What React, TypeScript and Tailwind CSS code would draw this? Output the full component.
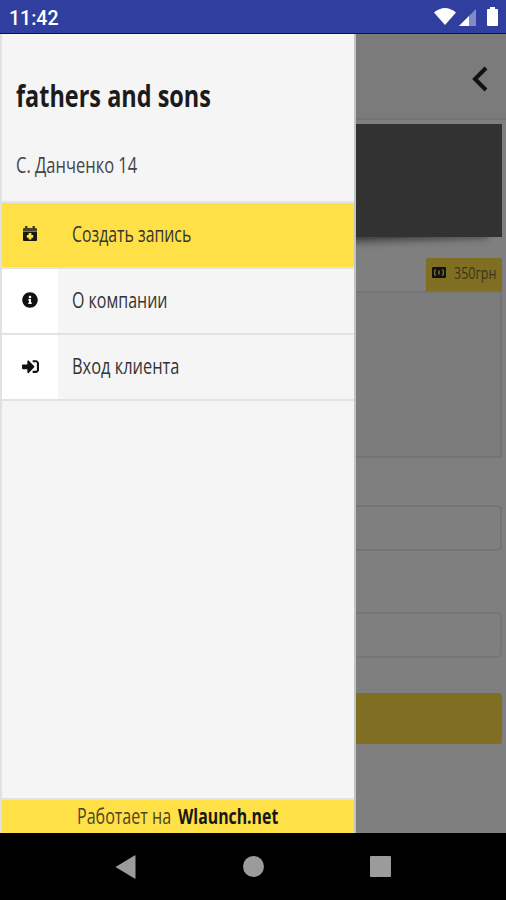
import type { ReactNode } from 'react';
import { FaInfoCircle, FaSignInAlt } from 'react-icons/fa';

function Narrow({ className, children }: { className: string; children: ReactNode }) {
  return (
    <span className={`block w-max origin-left whitespace-nowrap ${className}`}>{children}</span>
  );
}

function StatusBar() {
  return (
    <header className="flex h-[34px] shrink-0 items-center justify-between border-b border-[#08088a] bg-[#303f9f] pt-px pr-[7px] pl-[9px] text-white">
      <span className="pt-[3px] font-[Roboto,sans-serif] text-[19.5px] leading-none font-medium">11:42</span>
      <svg width="66" height="22" viewBox="0 0 66 22" fill="currentColor">
        <path d="M1 6.5Q12 -2.5 23 6.5L12 19Z" />
        <path d="M43 3V20H26Z" opacity=".4" />
        <path d="M36 10V20H26Z" />
        <path d="M55 3h2V1h5v2h2q1 0 1 1v15q0 1-1 1h-9q-1 0-1-1V4q0-1 1-1Z" />
      </svg>
    </header>
  );
}

function CalendarPlus() {
  return (
    <svg width="16" height="18" viewBox="0 0 16 18">
      <path d="M1 4q0-1 1-1h1V1h2.5v2h5V1H13v2h1q1 0 1 1v2H1Z" fill="#4a4220" />
      <path d="M1 6.500h14v8.500q0 1-1 1H2q-1 0-1-1Z" fill="#171714" />
      <path d="M8 8v6.500M4.800 11.300h6.400" stroke="#ffe047" strokeWidth="2.8" />
    </svg>
  );
}

function MenuRow({ icon, active, children }: { icon: ReactNode; active?: boolean; children: ReactNode }) {
  return (
    <li className={`flex h-[66px] border-b-2 border-[#dfe3e5] ${active ? 'bg-[#ffe047]' : 'bg-[#f5f5f5]'}`}>
      <span className={`flex w-14 items-center justify-center pb-0.5 text-[#111] ${active ? '' : 'bg-white'}`}>{icon}</span>
      <span className="flex items-center pb-[4px] pl-3.5 text-[22px] text-[#333]">{children}</span>
    </li>
  );
}

function Drawer() {
  return (
    <aside className="absolute inset-y-0 left-0 flex w-[356px] flex-col border-r-2 border-l-2 border-r-[#bfc5c6] border-l-[#dfe2e4] bg-[#f5f5f5]">
      <div className="flex h-[169px] flex-col border-b-2 border-[#e1e4e8] pl-3.5">
        <h1 className="mt-[41px] text-[30px] leading-[42px] font-bold text-[#1b1b1b]">
          <Narrow className="scale-x-[0.782]">fathers and sons</Narrow>
        </h1>
        <p className="mt-[32px] text-[22px] leading-[30px] text-[#444]">
          <Narrow className="scale-x-[0.75]">С. Данченко 14</Narrow>
        </p>
      </div>
      <ul>
        <MenuRow active icon={<CalendarPlus />}>
          <Narrow className="scale-x-[0.72]">Создать запись</Narrow>
        </MenuRow>
        <MenuRow icon={<FaInfoCircle size={16} />}>
          <Narrow className="scale-x-[0.727]">О компании</Narrow>
        </MenuRow>
        <MenuRow icon={<FaSignInAlt size={17} />}>
          <Narrow className="scale-x-[0.745]">Вход клиента</Narrow>
        </MenuRow>
      </ul>
      <footer className="mt-auto flex h-[35px] items-center border-t-2 border-[#dfe3e5] bg-[#ffe047] pb-1 pl-[75px] text-[22px] leading-none">
        <div className="w-[101px] text-[#4c4522]">
          <Narrow className="scale-x-[0.73]">Работает на</Narrow>
        </div>
        <div className="font-bold text-[#171714]">
          <Narrow className="scale-x-[0.72]">Wlaunch.net</Narrow>
        </div>
      </footer>
    </aside>
  );
}

function BookingPage() {
  return (
    <div className="flex h-full flex-col bg-[#7f7f7f] pr-[4px]">
      <div className="-mr-[4px] flex h-[86px] shrink-0 items-center justify-end border-b-2 border-[#717474] bg-[#7b7b7b] pt-[5px] pr-[18px]">
        <svg width="17" height="26" viewBox="0 0 17 26" fill="none" stroke="#111" strokeWidth="4">
          <path d="M15 2 4 13 15 24" />
        </svg>
      </div>
      <div className="relative mt-1 h-[113px] shrink-0">
        <div className="absolute right-4 bottom-0.5 h-5 w-[200px] origin-right -rotate-2 bg-[#484848] shadow-[0_1px_7px_2px_#484848]" />
        <div className="relative h-full bg-[#323232]" />
      </div>
      <div className="mt-[21px] flex h-[33px] w-[76px] shrink-0 items-center self-end rounded-t-xs bg-[#806f23] pb-1 pl-1.5">
        <svg className="shrink-0" width="14" height="11" viewBox="0 0 14 11">
          <rect width="14" height="11" rx="1" fill="#111" />
          <path d="M4 2h6q2 0 2 2v3q0 2-2 2H4Q2 9 2 7V4Q2 2 4 2" fill="#806f23" />
          <ellipse cx="7" cy="5.500" rx="3.800" ry="4.500" fill="#111" />
          <path d="M7 3.500v4" stroke="#806f23" strokeWidth="1.500" />
        </svg>
        <div className="w-[42px] pl-2 text-[17px] leading-none text-[#393319]">
          <Narrow className="scale-x-[0.735]">350грн</Narrow>
        </div>
      </div>
      <div className="h-[167px] shrink-0 border-t-2 border-r-2 border-b-2 border-[#727575] bg-[#7c7c7c]" />
      <div className="mt-[47px] h-[46px] shrink-0 rounded-[5px] border-2 border-[#737676]" />
      <div className="mt-[61px] h-[46px] shrink-0 rounded-[5px] border-2 border-[#757777]" />
      <div className="mt-[35px] h-[51px] shrink-0 rounded-[3px] bg-[#806f23]" />
    </div>
  );
}

function NavigationBar() {
  return (
    <nav className="flex h-[67px] shrink-0 items-center justify-between bg-black pr-[115px] pl-[115px] text-[#9b9b9b]">
      <svg width="22" height="24" viewBox="0 0 22 24" fill="currentColor">
        <path d="M0.500 12 19.500 0.500Q20.500 0 20.500 1V23Q20.500 24 19.500 23.500Z" />
      </svg>
      <span className="size-[21px] rounded-full bg-[#9b9b9b]" />
      <span className="size-[21px] rounded-[1px] bg-[#9b9b9b]" />
    </nav>
  );
}

export default function App() {
  return (
    <div className="flex h-[900px] w-[506px] flex-col overflow-hidden font-['Open_Sans','Noto_Sans',sans-serif]">
      <StatusBar />
      <main className="relative h-[799px] shrink-0 overflow-hidden">
        <BookingPage />
        <Drawer />
      </main>
      <NavigationBar />
    </div>
  );
}
